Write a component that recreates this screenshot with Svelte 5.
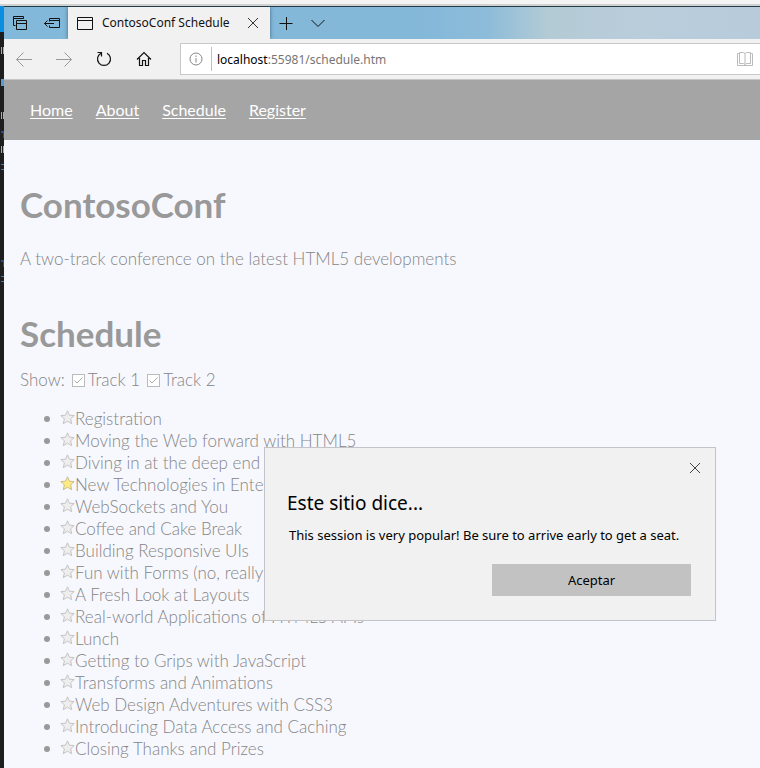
<script>
  const links = ['Home', 'About', 'Schedule', 'Register'];
  const sessions = [
    'Registration',
    'Moving the Web forward with HTML5',
    'Diving in at the deep end with Canvas',
    'New Technologies in Enterprise',
    'WebSockets and You',
    'Coffee and Cake Break',
    'Building Responsive UIs',
    'Fun with Forms (no, really!)',
    'A Fresh Look at Layouts',
    'Real-world Applications of HTML5 APIs',
    'Lunch',
    'Getting to Grips with JavaScript',
    'Transforms and Animations',
    'Web Design Adventures with CSS3',
    'Introducing Data Access and Caching',
    'Closing Thanks and Prizes'
  ];
  let starred = $state([3]);
  let track1 = $state(true);
  let track2 = $state(true);
  let open = $state(true);

  function toggle(i) {
    starred = starred.includes(i) ? starred.filter((n) => n !== i) : [...starred, i];
  }
</script>

<div class="desktop">
  <div class="edge" aria-hidden="true">
    <i class="blue"></i>
    <i class="mark orange" style:top="47px"></i>
    <i class="mark sky" style:top="79px"></i>
    <i class="mark orange" style:top="112px"></i>
    <i class="mark navy" style:top="131px"></i>
    <i class="mark orange" style:top="146px"></i>
    <i class="mark dash" style:top="164px"></i>
    <i class="mark navy" style:top="260px"></i>
    <i class="mark dash" style:top="276px"></i>
  </div>

  <div class="window">
    <header class="tabs">
      <button class="tool" aria-label="Tabs you've set aside">
        <svg width="16" height="16" viewBox="0 0 16 16"><path d="M3.5 10.500H1.500V1.500H11.500V3.500M1.500 3.500H11.500M4.500 5.500H14.500V14.500H4.500ZM4.500 8.500H14.500" /></svg>
      </button>
      <button class="tool" aria-label="Set these tabs aside">
        <svg width="18" height="16" viewBox="0 0 18 16"><path d="M6.500 6.500V3.500H16.500V12.500H6.500V10.500M6.500 5.500H16.500M1.500 8.500H11M4.500 5.500L1.500 8.500L4.500 11.500" /></svg>
      </button>
      <div class="tab">
        <svg width="16" height="14" viewBox="0 0 16 14"><path d="M.5 1.500H15.500V13.500H.5ZM.5 4.500H15.500" /></svg>
        <span>ContosoConf Schedule</span>
        <button aria-label="Close tab">
          <svg width="12" height="12" viewBox="0 0 12 12"><path d="M1 1L11 11M11 1L1 11" /></svg>
        </button>
      </div>
      <button class="tool" aria-label="New tab">
        <svg width="14" height="14" viewBox="0 0 14 14"><path d="M.5 7.500H13.500M7.500 1V14" /></svg>
      </button>
      <button class="tool" aria-label="Show tab previews">
        <svg width="14" height="14" viewBox="0 0 14 14"><path d="M.5 4L7 10.500L13.500 4" /></svg>
      </button>
    </header>

    <div class="toolbar">
      <button class="faded" aria-label="Back">
        <svg width="16" height="16" viewBox="0 0 16 16"><path d="M.5 8.500H16M7.500 1.500L.5 8.500L7.500 15.500" /></svg>
      </button>
      <button class="faded" aria-label="Forward">
        <svg width="16" height="16" viewBox="0 0 16 16"><path d="M0 8.500H15.500M8.500 1.500L15.500 8.500L8.500 15.500" /></svg>
      </button>
      <button aria-label="Refresh">
        <svg width="16" height="16" viewBox="0 0 16 16"><path class="bold" d="M5 2.200A6.500 6.500 0 1 0 11 2.200M1.500 1.500H5.500V5.500" /></svg>
      </button>
      <button aria-label="Home page">
        <svg width="16" height="16" viewBox="0 0 16 16"><path class="bold" d="M1 8.500L8 1.500L15 8.500M3.500 7V14.500H6.500V9.500H9.500V14.500H12.500V7" /></svg>
      </button>
      <div class="address">
        <button class="info" aria-label="Site information">
          <svg width="14" height="14" viewBox="0 0 14 14"><circle cx="7" cy="7" r="6" /><path d="M7 6V10.500M7 3.500V5" /></svg>
        </button>
        <div class="url"><b>localhost</b>:55981/schedule.htm</div>
        <button class="book" aria-label="Reading view">
          <svg width="16" height="16" viewBox="0 0 16 16"><path d="M2.500 1.500H6.500L8 2.500L9.500 1.500H13.500V12.500H9.500L8 13.500L6.500 12.500H2.500ZM8 2.500V13.500M2.500 2.500H.5V14.500H15.500V2.500H13.500" /></svg>
        </button>
      </div>
    </div>

    <nav>
      {#each links as link}
        <a href="#{link.toLowerCase()}">{link}</a>
      {/each}
    </nav>

    <main>
      <h1>ContosoConf</h1>
      <p class="lead">A two-track conference on the latest HTML5 developments</p>
      <h1 class="schedule">Schedule</h1>
      <div class="filters">
        <span>Show:</span>
        <label><input type="checkbox" bind:checked={track1} />Track 1</label>
        <label><input type="checkbox" bind:checked={track2} />Track 2</label>
      </div>
      <ul>
        {#each sessions as session, i}
          <li>
            <button class="star" class:on={starred.includes(i)} aria-label="Star {session}" onclick={() => toggle(i)}>
              <svg width="15" height="15" viewBox="0 0 15 15"><path d="M7.500 .8L9.400 5.200L14.200 5.600L10.600 8.800L11.700 13.700L7.500 11.200L3.300 13.700L4.400 8.800L.8 5.600L5.600 5.200Z" /></svg>
            </button><span>{session}</span>
          </li>
        {/each}
      </ul>
    </main>
  </div>

  {#if open}
    <div class="dialog" role="alertdialog" aria-labelledby="alert-title" aria-describedby="alert-text">
      <button class="close" aria-label="Close" onclick={() => (open = false)}>
        <svg width="12" height="12" viewBox="0 0 12 12"><path d="M1 1L11 11M11 1L1 11" /></svg>
      </button>
      <h2 id="alert-title">Este sitio dice...</h2>
      <p id="alert-text">This session is very popular! Be sure to arrive early to get a seat.</p>
      <button class="accept" onclick={() => (open = false)}>Aceptar</button>
    </div>
  {/if}
</div>

<style>
  :global(body) {
    margin: 0;
    background: #f7f8fe;
  }
  .desktop {
    position: relative;
    display: flex;
    height: 100vh;
    overflow: hidden;
    box-sizing: border-box;
    padding-top: 4px;
    background: #f4f4f4;
    font-family: Lato, 'Liberation Sans', sans-serif;
  }
  .edge {
    position: relative;
    flex: none;
    width: 4px;
    background: #1e1e1e;
    overflow: hidden;
    border-top: 2px solid #cfcfcf;
  }
  .blue {
    display: block;
    height: 26px;
    background: #0a8fe0;
  }
  .mark {
    position: absolute;
    margin-top: -6px;
    left: 1px;
    width: 3px;
    height: 7px;
    box-sizing: border-box;
  }
  .orange {
    border-left: 1px solid #d8a078;
    border-right: 1px solid #8db8e0;
  }
  .sky {
    background: #569cd6;
  }
  .navy {
    border-top: 2px solid #234d9c;
    border-right: 1px solid #234d9c;
  }
  .dash {
    height: 6px;
    border-top: 1px solid #4080b0;
    border-bottom: 1px solid #4080b0;
  }
  .window {
    flex: 1;
    min-width: 0;
    border-top: 2px solid #cfd2d0;
    background: #f7f8fe;
  }
  button {
    display: flex;
    align-items: center;
    justify-content: center;
    flex: none;
    padding: 0;
    border: 0;
    background: none;
    color: #111;
  }
  svg {
    display: block;
    flex: none;
    fill: none;
    stroke: currentColor;
    stroke-width: 1;
  }
  .bold {
    stroke-width: 1.2;
  }
  .tabs {
    display: flex;
    align-items: stretch;
    height: 32px;
    border-top: 1px solid #243c48;
    background: linear-gradient(90deg, #82b8da 0%, #84b8d9 55%, #8dbcd9 64%, #b3cbd5 72%, #bacddb 85%, #b8cbdb 100%);
  }
  .tool {
    width: 32px;
  }
  .tab {
    display: flex;
    align-items: center;
    width: 202px;
    box-sizing: border-box;
    padding: 0 11px 0 9px;
    background: #f1f1f1;
    box-shadow: 0 0 4px #406880;
    clip-path: inset(0 -5px 0 -5px);
    font: 12px/20px 'Noto Sans', sans-serif;
    color: #111;
  }
  .tab span {
    flex: 1;
    padding-left: 9px;
    white-space: nowrap;
  }
  .tab button {
    color: #333;
  }
  .toolbar {
    display: flex;
    align-items: center;
    height: 40px;
    border-bottom: 1px solid #c6c6c6;
    background: #f1f1f1;
  }
  .toolbar > button {
    width: 40px;
    height: 40px;
  }
  .toolbar .faded {
    color: #999;
  }
  .address {
    display: flex;
    align-items: center;
    flex: 1;
    height: 30px;
    margin-left: 16px;
    border: 1px solid #c8c8c8;
    border-right: 0;
    background: #fff;
    font: 12px/22px 'Noto Sans', sans-serif;
    color: #767676;
  }
  .info {
    width: 31px;
    height: 24px;
    border-right: 1px solid #c0c0c0;
    color: #888;
  }
  .url {
    flex: 1;
    padding: 2px 0 0 5px;
  }
  .url b {
    font-weight: 400;
    color: #000;
  }
  .book {
    width: 30px;
    color: #bbb;
  }
  nav {
    display: flex;
    gap: 23px;
    padding: 19px 26px;
    background: #a5a5a5;
    font-size: 16px;
    line-height: 22px;
  }
  nav a {
    color: #fff;
    text-underline-offset: 2px;
  }
  main {
    padding: 39px 16px 0;
    color: #858585;
    font-size: 17px;
    font-weight: 300;
    line-height: 22px;
  }
  h1 {
    margin: 0;
    color: #999;
    font-size: 35px;
    line-height: 50px;
    font-weight: 700;
  }
  .lead {
    margin: 19px 0 0;
  }
  .schedule {
    margin-top: 38px;
  }
  .filters {
    display: flex;
    gap: 7px;
    margin-top: 11px;
  }
  label {
    display: flex;
    align-items: center;
    gap: 3px;
  }
  input {
    appearance: none;
    width: 13px;
    height: 13px;
    box-sizing: border-box;
    margin: 0;
    border: 1px solid #bbb;
    background: #fff;
  }
  input:checked {
    background: no-repeat center url("data:image/svg+xml,%3Csvg xmlns='http://www.w3.org/2000/svg' width='11' height='11'%3E%3Cpath d='M1.500 5.500L4 8L9.500 2.500' fill='none' stroke='%23aaa'/%3E%3C/svg%3E") #fff;
  }
  ul {
    margin: 17px 0 0;
    padding: 0;
  }
  li {
    display: flex;
    align-items: center;
    white-space: nowrap;
  }
  li::before {
    content: '';
    width: 6px;
    height: 6px;
    margin: 0 10px 0 24px;
    border-radius: 3px;
    background: #999;
  }
  .star {
    height: 18px;
    align-items: flex-start;
    color: #c4c4c4;
  }
  .star path {
    fill: #eee;
  }
  .star.on {
    color: #c9bd8c;
  }
  .star.on path {
    fill: #ffec80;
  }
  .dialog {
    position: absolute;
    top: 447px;
    right: 44px;
    display: flex;
    flex-direction: column;
    width: 452px;
    box-sizing: border-box;
    padding: 14px 24px 24px 22px;
    border: 1px solid #c3c3c9;
    background: #f1f1f1;
    color: #000;
    font-family: 'Noto Sans', sans-serif;
  }
  .close {
    align-self: flex-end;
    width: 12px;
    height: 12px;
    margin-right: -10px;
    color: #444;
  }
  h2 {
    margin: 15px 0 0;
    font-size: 19px;
    line-height: 28px;
    font-weight: 400;
  }
  .dialog p {
    margin: 8px 0 0 2px;
    font-size: 13px;
    line-height: 20px;
    white-space: nowrap;
  }
  .accept {
    align-self: flex-end;
    width: 199px;
    height: 32px;
    margin-top: 19px;
    background: #c2c2c2;
    font: 13px/20px 'Noto Sans', sans-serif;
    color: #000;
  }
</style>
